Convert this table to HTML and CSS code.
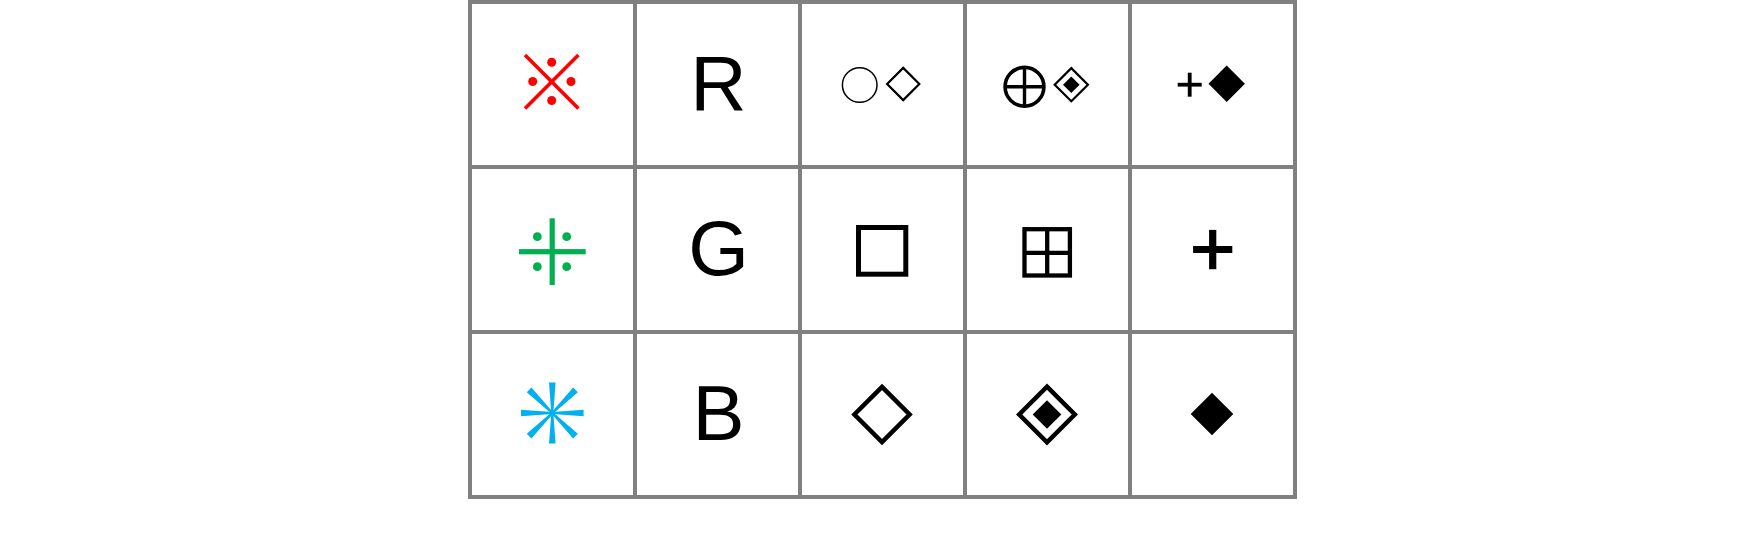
FILE: index.html
```html
<!DOCTYPE html>
<html lang="en">
<head>
<meta charset="utf-8">
<title>Symbol legend</title>
<link rel="stylesheet" href="styles.css">
</head>
<body>
<div class="legend">
  <!-- Row 1 -->
  <div class="cell">
    <svg class="sym" viewBox="0 0 161 161" role="img" aria-label="※">
      <g class="red">
        <line x1="53" y1="51" x2="106.4" y2="104.4" stroke-width="3.6"/>
        <line x1="106.4" y1="51" x2="53" y2="104.4" stroke-width="3.6"/>
        <circle cx="79.7" cy="58.3" r="4.5"/>
        <circle cx="60.7" cy="77.5" r="4.5"/>
        <circle cx="99" cy="77.5" r="4.5"/>
        <circle cx="79.7" cy="96.5" r="4.5"/>
      </g>
    </svg>
  </div>
  <div class="cell letter">R</div>
  <div class="cell">
    <svg class="sym" viewBox="0 0 161 161" role="img" aria-label="○◇">
      <circle cx="57.7" cy="81" r="17.3" fill="none" stroke="#000" stroke-width="1.5"/>
      <polygon points="101.2,63.9 117.3,80 101.2,96.1 85.1,80" fill="none" stroke="#000" stroke-width="2.2"/>
    </svg>
  </div>
  <div class="cell">
    <svg class="sym" viewBox="0 0 161 161" role="img" aria-label="⊕◈">
      <circle cx="57.5" cy="82.8" r="19.4" fill="none" stroke="#000" stroke-width="3.6"/>
      <line x1="57.5" y1="63.3" x2="57.5" y2="102.3" stroke="#000" stroke-width="3.4"/>
      <line x1="38" y1="82.8" x2="77" y2="82.8" stroke="#000" stroke-width="3.4"/>
      <polygon points="104.3,64.1 120.9,80.7 104.3,97.3 87.7,80.7" fill="none" stroke="#000" stroke-width="2.2"/>
      <polygon points="104.3,72.4 112.6,80.7 104.3,89 96,80.7" fill="#000"/>
    </svg>
  </div>
  <div class="cell">
    <svg class="sym" viewBox="0 0 161 161" role="img" aria-label="+◆">
      <rect x="45.7" y="78.8" width="24" height="3.8" fill="#000"/>
      <rect x="55.8" y="68.7" width="3.8" height="24" fill="#000"/>
      <polygon points="94.7,61.5 112.9,79.7 94.7,97.9 76.5,79.7" fill="#000"/>
    </svg>
  </div>

  <!-- Row 2 -->
  <div class="cell">
    <svg class="sym" viewBox="0 0 161 161" role="img" aria-label="⁜">
      <g class="green">
        <rect x="77.6" y="49.3" width="5.2" height="66.7"/>
        <rect x="47" y="80.1" width="66.7" height="5.2"/>
        <circle cx="65.3" cy="67.7" r="4.4"/>
        <circle cx="94.7" cy="67.7" r="4.4"/>
        <circle cx="65.3" cy="97.7" r="4.4"/>
        <circle cx="94.7" cy="97.7" r="4.4"/>
      </g>
    </svg>
  </div>
  <div class="cell letter">G</div>
  <div class="cell">
    <svg class="sym" viewBox="0 0 161 161" role="img" aria-label="□">
      <rect x="56.5" y="58.5" width="47.3" height="46.7" fill="none" stroke="#000" stroke-width="5"/>
    </svg>
  </div>
  <div class="cell">
    <svg class="sym" viewBox="0 0 161 161" role="img" aria-label="⊞">
      <rect x="57.5" y="60.2" width="45.4" height="46.3" fill="none" stroke="#000" stroke-width="4.3"/>
      <line x1="80.2" y1="60.2" x2="80.2" y2="106.5" stroke="#000" stroke-width="4.3"/>
      <line x1="57.5" y1="83.8" x2="102.9" y2="83.8" stroke="#000" stroke-width="4.3"/>
    </svg>
  </div>
  <div class="cell">
    <svg class="sym" viewBox="0 0 161 161" role="img" aria-label="+">
      <rect x="61.1" y="77" width="39.2" height="7" fill="#000"/>
      <rect x="77.1" y="60.9" width="7.2" height="39.3" fill="#000"/>
    </svg>
  </div>

  <!-- Row 3 -->
  <div class="cell">
    <svg class="sym" viewBox="0 0 161 161" role="img" aria-label="✳">
      <g class="blue" transform="translate(80.3 79)">
        <polygon points="-3.3,-30.5 3.3,-30.5 1,0 3.3,30.5 -3.3,30.5 -1,0"/>
        <polygon points="-3.3,-31.3 3.3,-31.3 1,0 3.3,31.3 -3.3,31.3 -1,0" transform="rotate(90)"/>
        <polygon points="-3.3,-32.8 3.3,-32.8 1,0 3.3,32.8 -3.3,32.8 -1,0" transform="rotate(45)"/>
        <polygon points="-3.3,-32.8 3.3,-32.8 1,0 3.3,32.8 -3.3,32.8 -1,0" transform="rotate(-45)"/>
      </g>
    </svg>
  </div>
  <div class="cell letter">B</div>
  <div class="cell">
    <svg class="sym" viewBox="0 0 161 161" role="img" aria-label="◇">
      <polygon points="80,52.9 107.6,80.5 80,108.1 52.4,80.5" fill="none" stroke="#000" stroke-width="4.5"/>
    </svg>
  </div>
  <div class="cell">
    <svg class="sym" viewBox="0 0 161 161" role="img" aria-label="◈">
      <polygon points="80,52.7 107.8,80.5 80,108.3 52.2,80.5" fill="none" stroke="#000" stroke-width="4.5"/>
      <polygon points="80,66.2 94.3,80.5 80,94.8 65.7,80.5" fill="#000"/>
    </svg>
  </div>
  <div class="cell">
    <svg class="sym" viewBox="0 0 161 161" role="img" aria-label="◆">
      <polygon points="80,58.7 101.3,80 80,101.3 58.7,80" fill="#000"/>
    </svg>
  </div>
</div>
</body>
</html>
```

FILE: styles.css
```css
html, body {
  margin: 0;
  padding: 0;
  background: #ffffff;
}

body {
  width: 1753px;
  height: 543px;
  overflow: hidden;
  font-family: "Liberation Sans", Arial, sans-serif;
}

.legend {
  display: grid;
  grid-template-columns: repeat(5, 161px);
  grid-template-rows: repeat(3, 161px);
  gap: 4px;
  padding: 4px;
  margin-left: 468px;
  width: max-content;
  background: #808080;
}

.cell {
  background: #ffffff;
  display: flex;
  align-items: center;
  justify-content: center;
  overflow: hidden;
}

.letter {
  font-size: 78px;
  color: #000000;
  line-height: 1;
  padding-left: 2px;
  padding-bottom: 4px;
  box-sizing: border-box;
}

.sym {
  width: 161px;
  height: 161px;
  display: block;
}

.red {
  stroke: #ff0000;
  fill: #ff0000;
}

.red circle {
  stroke: none;
}

.green {
  fill: #00b050;
}

.blue {
  fill: #00b0f0;
}
```
